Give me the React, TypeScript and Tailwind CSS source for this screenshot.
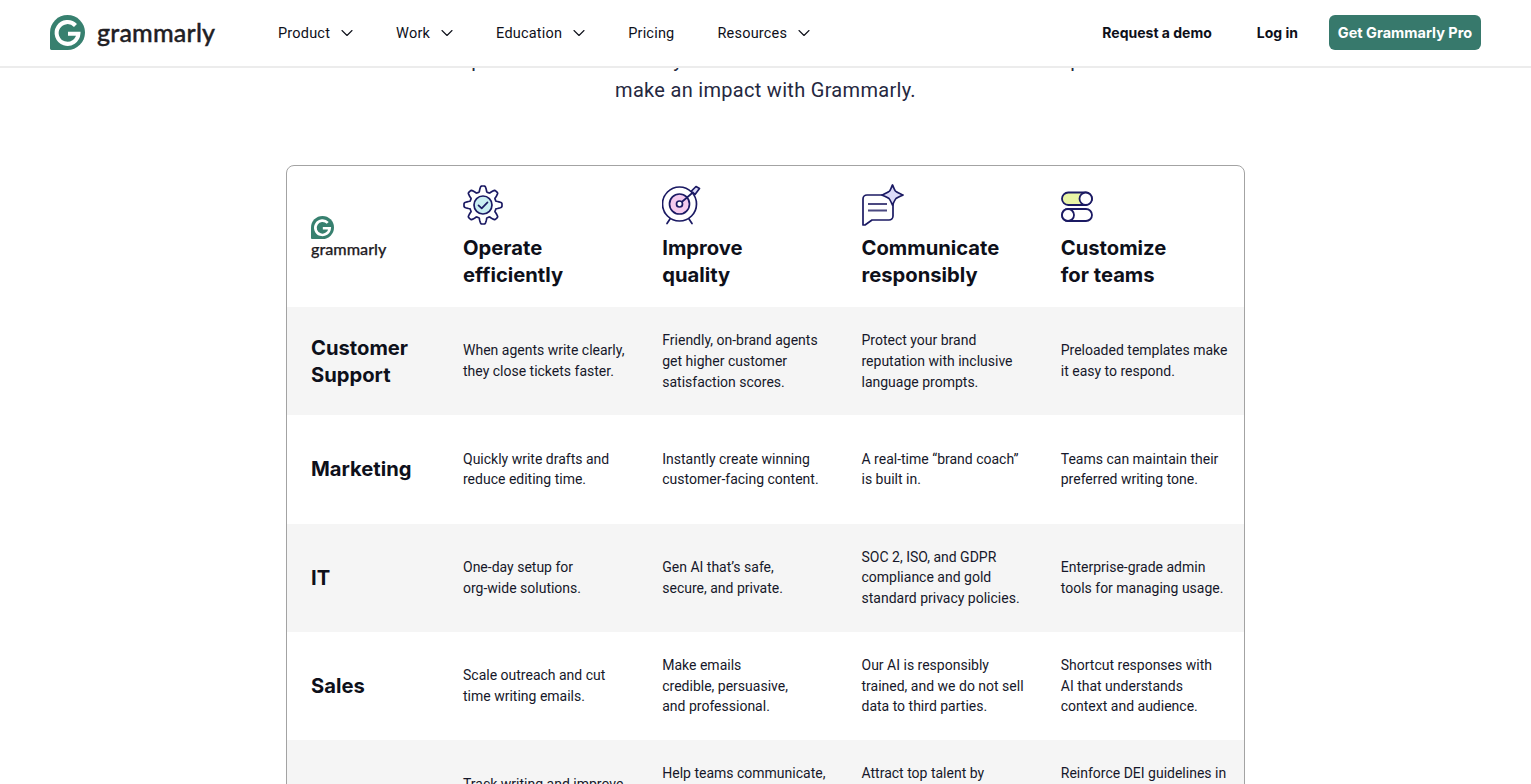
import React from "react";
import { ChevronDown } from "lucide-react";

const navy = "#1b1a63";

const navItems = [
  { label: "Product", menu: true },
  { label: "Work", menu: true },
  { label: "Education", menu: true },
  { label: "Pricing", menu: false },
  { label: "Resources", menu: true },
];

const rows = [
  {
    title: "Customer\nSupport",
    cells: [
      "When agents write clearly,\nthey close tickets faster.",
      "Friendly, on-brand agents\nget higher customer\nsatisfaction scores.",
      "Protect your brand\nreputation with inclusive\nlanguage prompts.",
      "Preloaded templates make\nit easy to respond.",
    ],
  },
  {
    title: "Marketing",
    cells: [
      "Quickly write drafts and\nreduce editing time.",
      "Instantly create winning\ncustomer-facing content.",
      "A real-time “brand coach”\nis built in.",
      "Teams can maintain their\npreferred writing tone.",
    ],
  },
  {
    title: "IT",
    cells: [
      "One-day setup for\norg-wide solutions.",
      "Gen AI that’s safe,\nsecure, and private.",
      "SOC 2, ISO, and GDPR\ncompliance and gold\nstandard privacy policies.",
      "Enterprise-grade admin\ntools for managing usage.",
    ],
  },
  {
    title: "Sales",
    cells: [
      "Scale outreach and cut\ntime writing emails.",
      "Make emails\ncredible, persuasive,\nand professional.",
      "Our AI is responsibly\ntrained, and we do not sell\ndata to third parties.",
      "Shortcut responses with\nAI that understands\ncontext and audience.",
    ],
  },
  {
    title: "HR",
    cells: [
      "Track writing and improve\nteam productivity.",
      "Help teams communicate,\ncollaborate, and\nstay aligned.",
      "Attract top talent by\nusing inclusive language\nin job posts.",
      "Reinforce DEI guidelines in\nevery message\nyour team writes.",
    ],
  },
];

// wavy outline of the gear, eight lobes
const gearPath = (() => {
  const pts: string[] = [];
  for (let i = 0; i < 160; i++) {
    const a = (i / 160) * Math.PI * 2;
    const wave = Math.max(-1, Math.min(1, Math.cos(a * 8) * 1.5));
    const r = 16.2 + 2.8 * wave;
    pts.push(`${(20 + r * Math.sin(a)).toFixed(2)} ${(20 - r * Math.cos(a)).toFixed(2)}`);
  }
  return "M" + pts.join("L") + "Z";
})();

const GLogo = ({ className }: { className: string }) => (
  <svg viewBox="0 0 36 36" className={className}>
    <path d="M18 0A18 18 0 1 1 18 36H1.5A1.5 1.5 0 0 1 0 34.5V18A18 18 0 0 1 18 0Z" fill="#37806f" />
    <path
      d="M26.2 10.8A11.2 11.2 0 1 0 29.2 19.2H18.5"
      fill="none"
      stroke="#fff"
      strokeWidth="4.2"
    />
  </svg>
);

const GearIcon = () => (
  <svg viewBox="0 0 40 40" className="h-10 w-10" fill="none" stroke={navy} strokeWidth="1.7">
    <path d={gearPath} strokeLinejoin="round" />
    <circle cx="20" cy="20" r="9" fill="#c9eef2" />
    <path d="M15.5 20.3l3.2 3 5.8-6" strokeLinecap="round" strokeLinejoin="round" />
  </svg>
);

const TargetIcon = () => (
  <svg viewBox="0 0 40 40" className="h-10 w-10" fill="none" stroke={navy} strokeWidth="1.7">
    <path d="M8 34l-3 4.500M27 34l3 4.500" strokeLinecap="round" />
    <circle cx="17.500" cy="19" r="17" fill="#fff" />
    <circle cx="17.500" cy="19" r="10" fill="#f4cbee" />
    <path d="M18 18.500L32 6.500" />
    <path d="M29.500 6L34 1.500L37.500 3.500L33 9.500Z" fill="#dcdaf8" strokeLinejoin="round" />
    <circle cx="17.500" cy="19" r="3" fill="#fff" />
  </svg>
);

const ChatIcon = () => (
  <svg viewBox="0 0 42 42" className="h-[42px] w-[42px]" fill="none" stroke={navy} strokeWidth="1.7">
    <path
      d="M5 11H27A4 4 0 0 1 31 15V32A4 4 0 0 1 27 36H10L3 41H1V15A4 4 0 0 1 5 11Z"
      fill="#fff"
      strokeLinejoin="round"
    />
    <path d="M6 20H25M6 26.500H25" stroke="#4a4880" strokeWidth="1.8" />
    <path
      d="M30.500 1C31.500 3 33 7.500 34 7.500C35.500 8.500 39 10 41 11C39 12 35.500 13.500 34 14.500C33 15.500 31.500 19 30.500 21C29.500 19 28 15.500 27 14.500C25.500 13.500 22 12 20 11C22 10 25.500 8.500 27 7.500C28 7.500 29.500 3 30.500 1Z"
      fill="#dcdaf8"
      strokeLinejoin="round"
    />
  </svg>
);

const ToggleIcon = () => (
  <svg viewBox="0 0 32 34" className="h-[34px] w-8" fill="none" stroke={navy} strokeWidth="1.8">
    <rect x="1" y="4.500" width="30" height="12.500" rx="6.250" fill="#e9f5a6" />
    <circle cx="24.750" cy="10.750" r="6.250" fill="#fff" />
    <rect x="1" y="21" width="30" height="12" rx="6" fill="#fff" />
    <circle cx="7" cy="27" r="6" fill="#fff" />
  </svg>
);

const columns = [
  { title: "Operate\nefficiently", icon: <GearIcon /> },
  { title: "Improve\nquality", icon: <TargetIcon /> },
  { title: "Communicate\nresponsibly", icon: <ChatIcon /> },
  { title: "Customize\nfor teams", icon: <ToggleIcon /> },
];

const App: React.FC = () => {
  return (
    <div className="flex h-screen flex-col overflow-hidden bg-white font-['Inter',sans-serif] text-[#0e101a]">
      <header className="relative z-10 flex h-[68px] shrink-0 items-center border-b-2 border-[#ececec] bg-white pb-[2px] pl-[50px] pr-[50px]">
        <div className="flex w-[228px] items-center gap-3">
          <GLogo className="h-[35px] w-[35px]" />
          <span className="font-['Lato',sans-serif] text-[25px] font-medium leading-none tracking-[0.2px] text-[#1f2024] [-webkit-text-stroke:0.4px_#1f2024]">
            grammarly
          </span>
        </div>
        <nav className="flex items-center gap-[43px]">
          {navItems.map((item) => (
            <div key={item.label} className="flex items-center gap-[7px]">
              <span className="pt-[3px] font-['Roboto',sans-serif] text-[14.500px] tracking-[0.2px]">{item.label}</span>
              {item.menu && <ChevronDown className="-mr-1 mt-[1px] h-5 w-5" strokeWidth={1.3} />}
            </div>
          ))}
        </nav>
        <div className="ml-auto flex items-center">
          <span className="mr-[45px] text-[14px] font-bold">Request a demo</span>
          <span className="mr-[31px] text-[14px] font-bold">Log in</span>
          <span className="flex h-[35px] w-[152px] items-center justify-center rounded-md bg-[#37796c] pt-[1px] text-[14.500px] font-bold text-white">
            Get Grammarly Pro
          </span>
        </div>
      </header>

      <main className="-mt-[23px] shrink-0">
        <p className="text-center font-['Roboto',sans-serif] text-[20px] leading-[30px] tracking-[0.3px] text-[#252840]">
          Explore how teams in any unit or role will all now see how AI can help
          <br />
          make an impact with Grammarly.
        </p>

        <div className="mx-auto mt-[60px] w-[959px] rounded-t-lg border border-[#a3a3a3]">
          <div className="grid grid-cols-[160px_repeat(4,1fr)]">
            <div className="flex flex-col justify-center pl-6 pt-[1px]">
              <GLogo className="h-[23px] w-[23px]" />
              <span className="font-['Lato',sans-serif] text-[16.200px] font-medium leading-5 text-[#1f2024] [-webkit-text-stroke:0.25px_#1f2024]">
                grammarly
              </span>
            </div>
            {columns.map((col) => (
              <div key={col.title} className="flex flex-col px-4 py-[19px]">
                <div className="flex h-10 items-center">{col.icon}</div>
                <h3 className="mt-[9px] whitespace-pre-line text-[20.200px] font-bold leading-[27px]">{col.title}</h3>
              </div>
            ))}
          </div>

          {rows.map((row, i) => (
            <div
              key={row.title}
              className={`grid min-h-[108.300px] grid-cols-[160px_repeat(4,1fr)] items-center ${
                i % 2 === 0 ? "bg-[#f5f5f5]" : "bg-white"
              }`}
            >
              <h3 className="whitespace-pre-line pb-[1px] pl-6 text-[20.200px] font-bold leading-[27px]">{row.title}</h3>
              {row.cells.map((cell, j) => (
                <p
                  key={j}
                  className="whitespace-pre-line pl-4 font-['Roboto',sans-serif] text-[14px] leading-[20.800px] text-[#16182a]"
                >
                  {cell}
                </p>
              ))}
            </div>
          ))}
        </div>
      </main>
    </div>
  );
};

export default App;
